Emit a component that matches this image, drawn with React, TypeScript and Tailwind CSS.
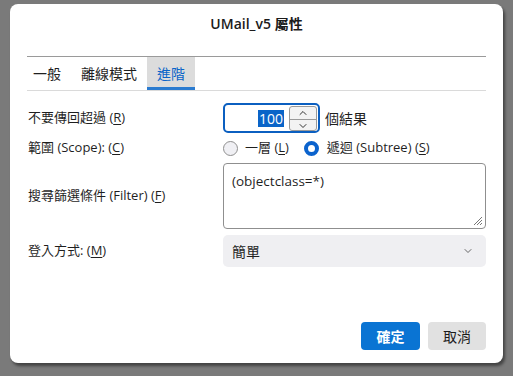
import { ChevronDown, ChevronUp } from 'lucide-react';

const FONT = "font-['Segoe_UI','Open_Sans','Noto_Sans_CJK_TC',sans-serif]";

const Key = ({ k }: { k: string }) => <span className="underline underline-offset-2">{k}</span>;

const Tab = ({ label, active }: { label: string; active?: boolean }) => (
    <div
        className={`relative flex h-[33px] items-center px-[10px] text-[14px] ${active ? 'bg-[#dcdcdc] text-[#0a64c8]' : 'text-[#1f1f1f]'}`}
    >
        {label}
        {active && <div className="absolute bottom-0 left-0 right-0 h-[3px] bg-[#2a7bd0]" />}
    </div>
);

export default function App() {
    return (
        <div className={`h-[376px] w-[513px] bg-[#7a7a7a] pl-[10px] pt-[4px] text-[13px] text-[#1f1f1f] ${FONT}`}>
            <div className="flex h-[359px] w-[493px] flex-col rounded-lg bg-white px-[17px] pb-[13px] shadow-[2px_3px_3px_rgba(0,0,0,0.45)]">
                {/* title */}
                <div className="pt-[11px] text-center text-[14px] font-semibold leading-[18px] text-[#1b1b1b]">
                    UMail_v5 屬性
                </div>

                {/* tabs */}
                <div className="mt-[23px] flex border-b border-t border-b-[#dadada] border-t-[#9a9a9a]">
                    <div className="-ml-[4px] flex">
                        <Tab label="一般" />
                        <Tab label="離線模式" />
                        <Tab label="進階" active />
                    </div>
                </div>

                {/* form */}
                <div className="mt-[12px] grid grid-cols-[195px_1fr] items-center gap-y-[2px] pl-[1px]">
                    <div>不要傳回超過 (<Key k="R" />)</div>
                    <div className="flex items-center gap-[5px]">
                        <div className="flex h-[30px] w-[97px] items-center rounded-[5px] border-2 border-[#0b5fc0] pl-[33px] pr-[1px]">
                            <span className="bg-[#0a64c8] px-px text-[14px] leading-[17px] text-white">100</span>
                            <div className="ml-auto flex h-[25px] w-[28px] flex-col overflow-hidden rounded-[3px] border border-[#9a9a9a] bg-[#f3f3f3]">
                                <div className="flex flex-1 items-center justify-center border-b border-[#9a9a9a]">
                                    <ChevronUp size={12} strokeWidth={2} color="#333" />
                                </div>
                                <div className="flex flex-1 items-center justify-center">
                                    <ChevronDown size={12} strokeWidth={2} color="#333" />
                                </div>
                            </div>
                        </div>
                        <span className="text-[14px]">個結果</span>
                    </div>

                    <div>範圍 (Scope): (<Key k="C" />)</div>
                    <div className="flex h-[26px] items-center">
                        <span className="h-[15px] w-[15px] rounded-full border border-[#8f8f8f] bg-[#f0f0f4]" />
                        <span className="ml-[7px]">一層 (<Key k="L" />)</span>
                        <span className="ml-[15px] h-[15px] w-[15px] rounded-full border-[4px] border-[#0b63cd] bg-white" />
                        <span className="ml-[8px]">遞迴 (Subtree) (<Key k="S" />)</span>
                    </div>

                    <div>搜尋篩選條件 (Filter) (<Key k="F" />)</div>
                    <div className="relative h-[66px] rounded-[4px] border border-[#8f8f8f] px-[8px] pt-[7px] text-[13.5px]">
                        (objectclass=*)
                        <svg className="absolute bottom-[2px] right-[2px]" width="11" height="11" viewBox="0 0 11 11">
                            <path d="M10 2 L2 10 M10 5 L5 10 M10 8 L8 10" stroke="#777" strokeWidth="1" />
                        </svg>
                    </div>

                    <div className="mt-[4px]">登入方式: (<Key k="M" />)</div>
                    <div className="mt-[4px] flex h-[32px] items-center rounded-[5px] bg-[#efeff2] pl-[9px] pr-[12px] text-[14px]">
                        簡單
                        <ChevronDown className="ml-auto" size={12} strokeWidth={1.6} color="#444" />
                    </div>
                </div>

                {/* buttons */}
                <div className="mt-auto flex justify-end gap-[8px]">
                    <button className="h-[28px] w-[59px] rounded-[4px] bg-[#0a74d3] text-[14px] font-semibold text-white">
                        確定
                    </button>
                    <button className="h-[28px] w-[58px] rounded-[4px] bg-[#e1e1e1] text-[14px] text-[#1b1b1b]">
                        取消
                    </button>
                </div>
            </div>
        </div>
    );
}
